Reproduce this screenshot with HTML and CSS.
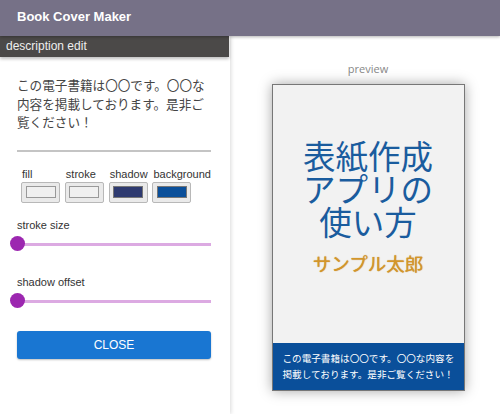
FILE: index.html
```html
<!DOCTYPE html>
<html lang="ja">
<head>
<meta charset="utf-8">
<title>Book Cover Maker</title>
<link rel="stylesheet" href="styles.css">
</head>
<body>
<header class="appbar">Book Cover Maker</header>
<main class="main">
  <aside class="panel">
    <div class="panel-head">description edit</div>
    <div class="panel-body">
      <p class="desc">この電子書籍は〇〇です。〇〇な内容を掲載しております。是非ご覧ください！</p>
      <div class="divider"></div>
      <div class="colors">
        <div class="color-col">
          <span class="color-label">fill</span>
          <button class="swatch"><span class="chip chip-fill"></span></button>
        </div>
        <div class="color-col">
          <span class="color-label">stroke</span>
          <button class="swatch"><span class="chip chip-stroke"></span></button>
        </div>
        <div class="color-col">
          <span class="color-label">shadow</span>
          <button class="swatch"><span class="chip chip-shadow"></span></button>
        </div>
        <div class="color-col">
          <span class="color-label">background</span>
          <button class="swatch"><span class="chip chip-bg"></span></button>
        </div>
      </div>
      <div class="field">
        <div class="field-label">stroke size</div>
        <div class="slider"><span class="track"></span><span class="thumb"></span></div>
      </div>
      <div class="field field-2">
        <div class="field-label">shadow offset</div>
        <div class="slider"><span class="track"></span><span class="thumb"></span></div>
      </div>
      <button class="close">CLOSE</button>
    </div>
  </aside>
  <section class="preview">
    <div class="preview-label">preview</div>
    <div class="cover">
      <div class="cover-title">表紙作成<br>アプリの<br>使い方</div>
      <div class="cover-author">サンプル太郎</div>
      <div class="cover-band">この電子書籍は〇〇です。〇〇な内容を掲載しております。是非ご覧ください！</div>
    </div>
  </section>
</main>
</body>
</html>
```
FILE: styles.css
```css
* { box-sizing: border-box; }
html, body { margin: 0; padding: 0; }
body {
  width: 500px;
  height: 414px;
  overflow: hidden;
  background: #fff;
  font-family: "Liberation Sans", Arial, "Noto Sans CJK JP", sans-serif;
}
.appbar {
  height: 36px;
  background: #767187;
  color: #fff;
  font-weight: bold;
  font-size: 13px;
  line-height: 33px;
  padding-left: 17px;
  box-shadow: 0 1px 3px rgba(0,0,0,0.3);
  position: relative;
  z-index: 3;
}
.main {
  display: flex;
  height: 378px;
}
.panel {
  width: 230px;
  flex: none;
  background: #fff;
  box-shadow: 1px 0 4px rgba(0,0,0,0.15);
  position: relative;
  z-index: 2;
}
.panel-head {
  height: 21px;
  background: #4b4948;
  color: #eee;
  font-size: 12px;
  line-height: 21px;
  padding-left: 6px;
  box-shadow: 0 2px 3px rgba(0,0,0,0.25);
  margin-right: 1px;
}
.panel-body {
  padding: 19px 19px 0 17px;
}
.desc {
  margin: 0;
  font-family: "Noto Sans CJK JP", sans-serif;
  font-size: 12.6px;
  line-height: 18.5px;
  color: #444;
}
.divider {
  height: 2px;
  background: #c4c4c4;
  margin-top: 18px;
}
.colors {
  display: flex;
  margin-top: 16px;
  padding-left: 4px;
}
.color-col {
  display: flex;
  flex-direction: column;
  width: 44px;
}
.color-col:last-child { width: auto; }
.color-label {
  font-size: 11px;
  color: #333;
  line-height: 13px;
  padding-left: 1px;
}
.swatch {
  width: 39px;
  height: 21px;
  margin: 1px 0 0 0;
  padding: 0;
  background: #eaeaea;
  border: 1px solid #b8b8b8;
  border-radius: 2px;
  display: flex;
  align-items: center;
  justify-content: center;
}
.chip {
  width: 30px;
  height: 12px;
  border: 1px solid #999;
}
.chip-fill, .chip-stroke { background: #f0f0f0; }
.chip-shadow { background: #2e3a70; border-color: #777; }
.chip-bg { background: #0a4f9a; border-color: #777; }
.field { margin-top: 15px; }
.field-2 { margin-top: 22px; }
.field-label {
  font-size: 11px;
  color: #333;
  line-height: 14px;
}
.slider {
  position: relative;
  height: 18px;
  margin-top: 3px;
}
.track {
  position: absolute;
  left: 0;
  right: 0;
  top: 8px;
  height: 3px;
  background: #dcaae2;
}
.thumb {
  position: absolute;
  left: -7px;
  top: 1px;
  width: 15px;
  height: 15px;
  border-radius: 50%;
  background: #9c27b0;
}
.close {
  display: block;
  width: 194px;
  height: 28px;
  margin-top: 21px;
  border: none;
  border-radius: 3px;
  background: #1976d2;
  color: #fff;
  font-family: "Liberation Sans", Arial, sans-serif;
  font-size: 12px;
  box-shadow: 0 1px 2px rgba(0,0,0,0.25);
}
.preview {
  flex: 1;
  display: flex;
  flex-direction: column;
  align-items: center;
  padding-left: 6px;
}
.preview-label {
  margin-top: 26px;
  font-family: "Open Sans", sans-serif;
  font-size: 11px;
  color: #888;
  line-height: 14px;
}
.cover {
  margin-top: 8px;
  width: 193px;
  height: 307px;
  background: #f2f2f2;
  border: 1px solid #777;
  box-shadow: 0 0 12px rgba(0,0,0,0.35);
  display: flex;
  flex-direction: column;
  align-items: center;
  font-family: "Noto Sans CJK JP", sans-serif;
}
.cover-title {
  margin-top: 53px;
  font-size: 32.5px;
  line-height: 33px;
  color: #1a5c9e;
  text-align: center;
}
.cover-author {
  margin-top: 14px;
  font-size: 18.5px;
  line-height: 24px;
  color: #d4962a;
  text-shadow: 0 0 1px #c08020;
}
.cover-band {
  margin-top: auto;
  width: 100%;
  height: 47px;
  background: #0a4f9a;
  color: #fff;
  font-size: 9.6px;
  line-height: 16px;
  padding: 7px 8px 0 10px;
}
```
